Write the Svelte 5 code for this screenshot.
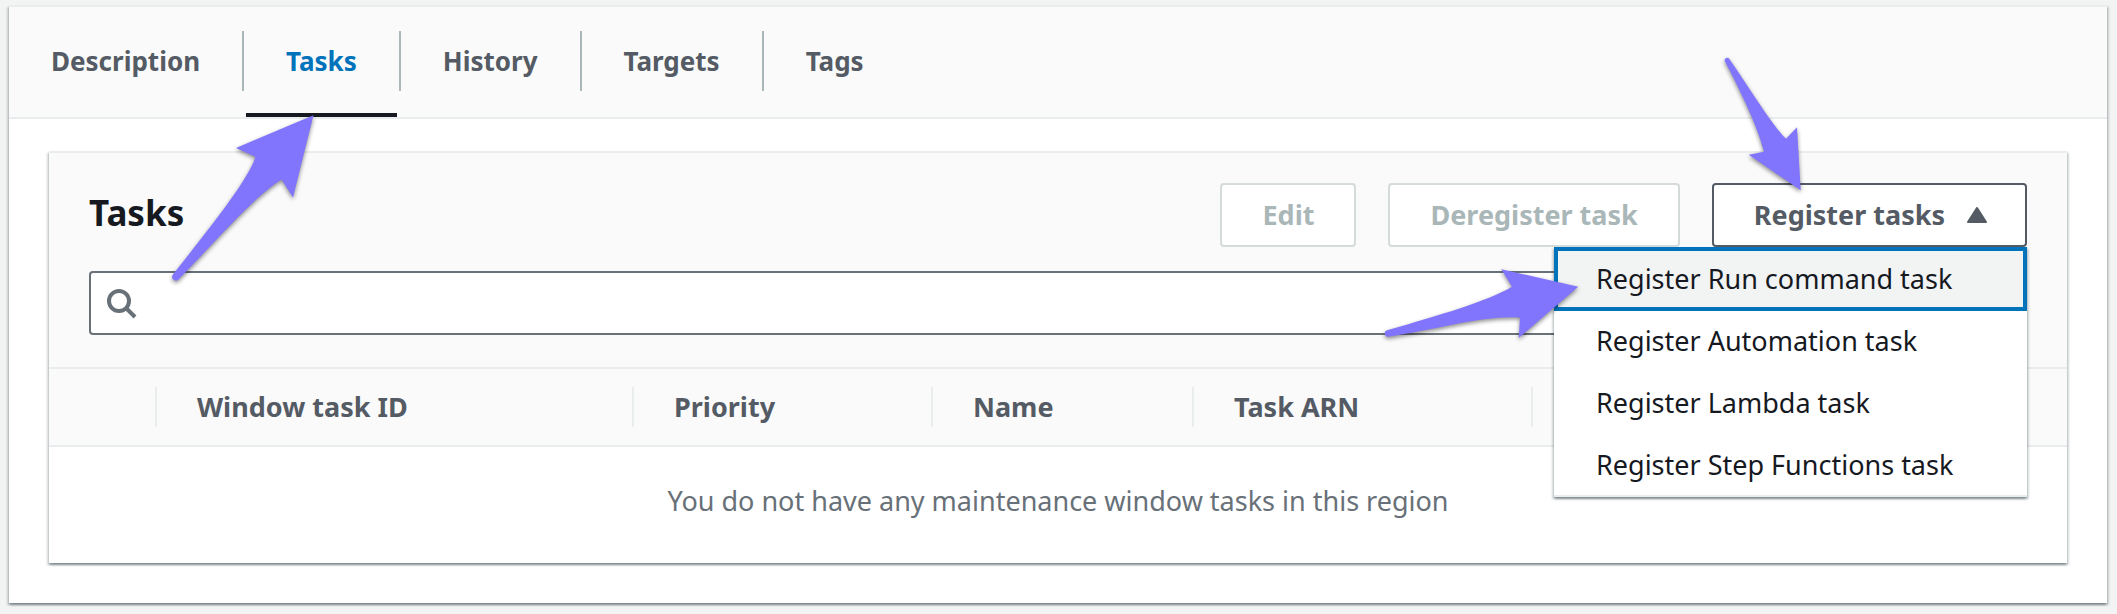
<script>
  const tabs = ['Description', 'Tasks', 'History', 'Targets', 'Tags'];
  const columns = ['Window task ID', 'Priority', 'Name', 'Task ARN'];
  const actions = [
    'Register Run command task',
    'Register Automation task',
    'Register Lambda task',
    'Register Step Functions task'
  ];
  let activeTab = $state('Tasks');
  let focused = $state(0);
  let query = $state('');
</script>

<main class="container">
  <nav class="tabs" aria-label="Window details">
    {#each tabs as tab}
      <button type="button" class="tab" class:active={tab === activeTab} onclick={() => (activeTab = tab)}>
        <span>{tab}</span>
      </button>
    {/each}
    <svg class="arrow arrow-tab" viewBox="168 110 152 176" aria-hidden="true">
      <path d="M313.5 115.3L236 148L255.5 157C247 182 208 230 173 274.5A3.7 3.7 0 0 0 179 279C215 242 256 195 281.5 179.5L293 197.5Z" />
    </svg>
  </nav>

  <div class="content">
    <section class="card">
      <header class="card-head">
        <h2>Tasks</h2>
        <div class="buttons">
          <button type="button" class="btn" disabled>Edit</button>
          <button type="button" class="btn" disabled>Deregister task</button>
          <div class="dropdown">
            <button type="button" class="btn trigger" aria-haspopup="true" aria-expanded="true">
              Register tasks
              <svg class="caret" viewBox="0 0 20 16" aria-hidden="true">
                <path d="M10 1L19 15H1Z" />
              </svg>
            </button>
            <ul class="menu">
              {#each actions as action, i}
                <li>
                  <button type="button" class="item" class:focused={i === focused} onmouseenter={() => (focused = i)}>
                    {action}
                  </button>
                </li>
              {/each}
            </ul>
            <svg class="arrow arrow-button" viewBox="1718 52 90 144" aria-hidden="true">
              <path d="M1800.7 190.3L1797 127.3L1786 138.7C1772 125 1753 93 1729.5 59.2A2.5 2.5 0 0 0 1725 61.5C1743 96 1758 128 1764 151.7L1748.7 154.7Z" />
            </svg>
            <svg class="arrow arrow-item" viewBox="1380 262 206 84" aria-hidden="true">
              <path d="M1578.3 286.7L1501.3 269.3L1512 286.7C1488 301 1440 315 1387 330.3A3.3 3.3 0 0 0 1388.5 336.7C1440 329 1485 315 1520 317.7L1518.7 338Z" />
            </svg>
          </div>
        </div>
      </header>

      <div class="search">
        <svg viewBox="0 0 32 32" aria-hidden="true">
          <circle cx="12" cy="14" r="10" />
          <path d="M19 21L28 30" />
        </svg>
        <input type="text" aria-label="Search tasks" bind:value={query} />
      </div>

      <table>
        <colgroup>
          <col class="c-select" />
          <col class="c-id" />
          <col class="c-priority" />
          <col class="c-name" />
          <col class="c-arn" />
          <col />
        </colgroup>
        <thead>
          <tr>
            <td><div class="cell"></div></td>
            {#each columns as column}
              <th scope="col"><div class="cell">{column}</div></th>
            {/each}
            <td></td>
          </tr>
        </thead>
        <tbody>
          <tr>
            <td colspan="6" class="empty">You do not have any maintenance window tasks in this region</td>
          </tr>
        </tbody>
      </table>
    </section>
  </div>
</main>

<style>
  :global(body) {
    background: #f2f3f3;
    overflow-x: hidden;
  }
  * {
    box-sizing: border-box;
  }
  .container,
  button,
  input {
    font-family: 'Noto Sans', 'Open Sans', sans-serif;
    font-size: 27px;
    line-height: 40px;
  }
  .container,
  .card,
  .menu {
    background: #fff;
    border-top: 2px solid #eaeded;
    box-shadow:
      0 2px 2px rgba(0, 28, 36, 0.3),
      2px 2px 2px rgba(0, 28, 36, 0.15),
      -2px 2px 2px rgba(0, 28, 36, 0.15);
  }
  .container {
    margin: 5px 10px 11px 9px;
    color: #545b64;
  }

  .tabs {
    position: relative;
    display: flex;
    padding-top: 24px;
    background: #fafafa;
    border-bottom: 2px solid #eaeded;
  }
  .tab {
    position: relative;
    height: 86px;
    padding: 0 0 26px;
    border: 0;
    background: none;
    color: #545b64;
    font-size: 26px;
    font-weight: 700;
    cursor: pointer;
  }
  .tab span {
    display: block;
    height: 60px;
    padding: 10px 42px;
    border-right: 2px solid #aab7b8;
  }
  .tab:nth-of-type(5) span {
    border-right: 0;
  }
  .tab.active {
    color: #0073bb;
  }
  .tab.active::after {
    content: '';
    position: absolute;
    left: 2px;
    right: 4px;
    bottom: 0;
    height: 4px;
    background: #16191f;
  }

  .content {
    padding: 32px 40px 40px;
  }
  .card-head {
    display: flex;
    justify-content: space-between;
    padding: 30px 40px 24px;
  }
  .card {
    background: linear-gradient(#fafafa, #fafafa) 0 0 / 100% 216px no-repeat #fff;
  }
  h2 {
    margin: 0;
    padding-top: 6px;
    color: #16191f;
    font-size: 35px;
    line-height: 48px;
    font-weight: 700;
  }
  .buttons {
    display: flex;
    gap: 32px;
  }
  .btn {
    display: flex;
    align-items: center;
    height: 64px;
    padding: 0 40px;
    border: 2px solid #545b64;
    border-radius: 4px;
    background: #fff;
    color: #545b64;
    font-weight: 700;
    white-space: nowrap;
  }
  .btn:disabled {
    border-color: #d5dbdb;
    color: #aab7b8;
  }
  .trigger {
    padding-right: 38px;
  }
  .caret {
    width: 20px;
    height: 16px;
    margin-left: 22px;
    fill: #545b64;
    stroke: #545b64;
    stroke-width: 2;
    stroke-linejoin: round;
  }
  .dropdown {
    position: relative;
  }
  .menu {
    position: absolute;
    z-index: 2;
    top: 64px;
    right: 0;
    width: 473px;
    margin: 0;
    padding: 0;
    list-style: none;
    border-top: 0;
    border-bottom: 2px solid #eaeded;
  }
  .menu li {
    height: 62px;
  }
  .item {
    display: block;
    position: relative;
    width: 100%;
    height: 64px;
    padding: 0 38px;
    border: 4px solid transparent;
    background: none;
    color: #16191f;
    text-align: left;
    white-space: nowrap;
  }
  .item.focused {
    border-color: #0073bb;
    background: #f2f3f3;
  }

  .search {
    display: flex;
    align-items: center;
    height: 64px;
    margin: 0 40px 32px;
    padding: 0 16px;
    border: 2px solid #687078;
    border-radius: 4px;
    background: #fff;
  }
  .search svg {
    flex: none;
    width: 32px;
    height: 32px;
    fill: none;
    stroke: #687078;
    stroke-width: 4;
  }
  .search input {
    flex: 1;
    min-width: 0;
    margin-left: 12px;
    border: 0;
    outline: 0;
    background: none;
    color: #16191f;
  }

  table {
    width: 100%;
    table-layout: fixed;
    border-collapse: separate;
    border-spacing: 0;
  }
  .c-select {
    width: 108px;
  }
  .c-id {
    width: 477px;
  }
  .c-priority {
    width: 299px;
  }
  .c-name {
    width: 261px;
  }
  .c-arn {
    width: 339px;
  }
  thead th,
  thead td {
    padding: 18px 0;
    background: #fafafa;
    border-top: 2px solid #eaeded;
    border-bottom: 2px solid #eaeded;
    text-align: left;
  }
  .cell {
    height: 40px;
    padding-left: 40px;
    border-right: 2px solid #eaeded;
    white-space: nowrap;
  }
  .empty {
    padding: 34px 40px 42px;
    color: #687078;
    text-align: center;
  }

  .arrow {
    position: absolute;
    z-index: 3;
    fill: #8175fd;
    filter: drop-shadow(0 2px 2px rgba(0, 0, 0, 0.45));
    pointer-events: none;
    overflow: visible;
  }
  .arrow-tab {
    top: 103px;
    left: 159px;
    width: 152px;
    height: 176px;
  }
  .arrow-button {
    top: -131px;
    right: 219px;
    width: 90px;
    height: 144px;
  }
  .arrow-item {
    top: 79px;
    right: 441px;
    width: 206px;
    height: 84px;
  }
</style>
